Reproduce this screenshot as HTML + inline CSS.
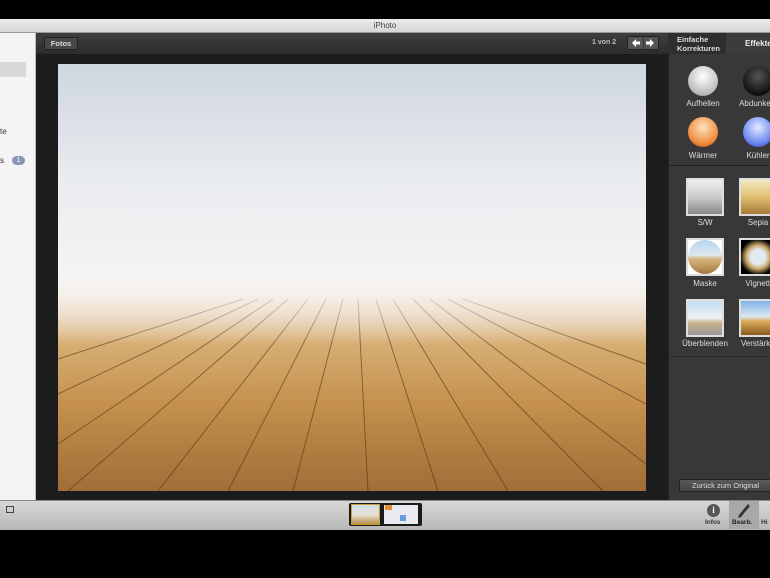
<!DOCTYPE html>
<html><head><meta charset="utf-8"><style>
*{margin:0;padding:0;box-sizing:border-box}
body{width:770px;height:578px;background:#000;position:relative;overflow:hidden;font-family:"Liberation Sans",sans-serif}
.a{position:absolute}
.lbl{position:absolute;color:#ddd;font-size:8px;text-align:center;width:60px}
.orb{position:absolute;width:30px;height:30px;border-radius:50%}
.th{position:absolute;width:38px;height:38px;border:2px solid #ddd}
</style></head><body>
<div class="a" style="left:0;top:19px;width:770px;height:14px;background:linear-gradient(#ececec,#d6d6d6);border-bottom:1px solid #999"></div>
<div class="a" style="left:0;top:19px;width:770px;height:14px;text-align:center;font-size:8px;line-height:14px;color:#444">iPhoto</div>
<div class="a" style="left:0;top:33px;width:36px;height:467px;background:#f4f4f5;border-right:1px solid #bbb"></div>
<div class="a" style="left:0;top:62px;width:26px;height:15px;background:#d8d8da"></div>
<div class="a" style="left:0;top:127px;font-size:8px;color:#333">te</div>
<div class="a" style="left:0;top:156px;font-size:8px;color:#333">s</div>
<div class="a" style="left:12px;top:156px;width:13px;height:9px;border-radius:5px;background:#8a98b5;color:#fff;font-size:7px;text-align:center;line-height:9px">1</div>
<div class="a" style="left:36px;top:33px;width:632px;height:467px;background:#1c1c1c"></div>
<div class="a" style="left:36px;top:33px;width:632px;height:21px;background:linear-gradient(#3e3e3e,#2c2c2c)"></div>
<div class="a" style="left:44px;top:37px;width:34px;height:13px;background:#474747;border:1px solid #222;border-radius:2px;color:#ddd;font-size:7.5px;line-height:11px;text-align:center;font-weight:bold">Fotos</div>
<div class="a" style="left:592px;top:39px;font-size:7px;color:#bbb;font-weight:bold">1 von 2</div>
<div class="a" style="left:627px;top:36px;width:32px;height:14px;background:#555;border:1px solid #222;border-radius:2px"></div>
<div class="a" style="left:643px;top:37px;width:1px;height:12px;background:#333"></div>
<svg class="a" style="left:630px;top:38px" width="28" height="10"><path d="M2 5 L6 1 L6 3.5 L10 3.5 L10 6.5 L6 6.5 L6 9 Z" fill="#fff"/><path d="M24 5 L20 1 L20 3.5 L16 3.5 L16 6.5 L20 6.5 L20 9 Z" fill="#fff"/></svg>
<svg class="a" style="left:58px;top:64px" width="588" height="427" viewBox="0 0 588 427">
<defs><linearGradient id="g" x1="0" y1="0" x2="0" y2="1">
<stop offset="0" stop-color="#cfd6de"/><stop offset="0.3" stop-color="#eceef2"/><stop offset="0.5" stop-color="#f4f1ef"/><stop offset="0.56" stop-color="#ecdcc4"/><stop offset="0.66" stop-color="#d6ad72"/><stop offset="0.8" stop-color="#c4904c"/><stop offset="1" stop-color="#a06e38"/></linearGradient>
<linearGradient id="f" x1="0" y1="0" x2="0" y2="1"><stop offset="0" stop-color="#f6f4f2" stop-opacity="0"/><stop offset="0.45" stop-color="#f6f4f2" stop-opacity="0.95"/><stop offset="1" stop-color="#f6f4f2" stop-opacity="0"/></linearGradient></defs>
<rect width="588" height="427" fill="url(#g)"/>
<g stroke="#4a2e12" stroke-width="1" opacity="0.55">
<line x1="200" y1="235" x2="0" y2="330"/><line x1="215" y1="235" x2="0" y2="380"/><line x1="230" y1="235" x2="10" y2="427"/><line x1="250" y1="235" x2="100" y2="427"/><line x1="268" y1="235" x2="170" y2="427"/><line x1="285" y1="235" x2="235" y2="427"/><line x1="300" y1="235" x2="310" y2="427"/><line x1="318" y1="235" x2="380" y2="427"/><line x1="335" y1="235" x2="450" y2="427"/><line x1="355" y1="235" x2="545" y2="427"/><line x1="372" y1="235" x2="588" y2="400"/><line x1="390" y1="235" x2="588" y2="340"/><line x1="405" y1="235" x2="588" y2="300"/><line x1="185" y1="235" x2="0" y2="295"/>
</g>
<rect y="160" width="588" height="120" fill="url(#f)"/>
</svg>
<div class="a" style="left:668px;top:33px;width:102px;height:467px;background:#383838;border-left:1px solid #222"></div>
<div class="a" style="left:668px;top:33px;width:58px;height:21px;background:#2e2e2e;color:#ddd;font-size:7.5px;font-weight:bold;padding:2px 0 0 9px;line-height:9px">Einfache<br>Korrekturen</div>
<div class="a" style="left:726px;top:33px;width:44px;height:21px;background:#3c3c3c;color:#eee;font-size:8px;font-weight:bold;padding:6px 0 0 19px">Effekte</div>
<div class="a" style="left:668px;top:165px;width:102px;height:1px;background:#222"></div>
<div class="a" style="left:668px;top:356px;width:102px;height:1px;background:#2a2a2a"></div>
<div class="orb" style="left:688px;top:66px;background:radial-gradient(circle at 50% 35%,#fff,#bbb 70%,#888)"></div>
<div class="orb" style="left:743px;top:66px;background:radial-gradient(circle at 50% 35%,#555,#111 70%)"></div>
<div class="orb" style="left:688px;top:117px;background:radial-gradient(circle at 50% 35%,#fde3c0,#f08b3c 65%,#b5351b)"></div>
<div class="orb" style="left:743px;top:117px;background:radial-gradient(circle at 50% 35%,#e5ecff,#6a86f2 65%,#2331a0)"></div>
<div class="lbl" style="left:673px;top:99px">Aufhellen</div><div class="lbl" style="left:728px;top:99px">Abdunkeln</div>
<div class="lbl" style="left:673px;top:151px">Wärmer</div><div class="lbl" style="left:728px;top:151px">Kühler</div>
<div class="th" style="left:686px;top:178px;background:linear-gradient(#eee,#ccc 50%,#888)"></div>
<div class="th" style="left:739px;top:178px;background:linear-gradient(#f3e8c0,#e0c070 50%,#a77a38)"></div>
<div class="th" style="left:686px;top:238px;background:#fff"><div style="width:34px;height:34px;border-radius:50%;background:linear-gradient(#b8d4ee,#dde8ef 45%,#d8b880 55%,#a07840)"></div></div>
<div class="th" style="left:739px;top:238px;background:radial-gradient(circle,#e0ecf2 30%,#c8a868 50%,#000 75%)"></div>
<div class="th" style="left:686px;top:299px;background:linear-gradient(#c4ddf0,#eef2f4 50%,#c9b18a 65%,#999)"></div>
<div class="th" style="left:739px;top:299px;background:linear-gradient(#7fb3e6,#dde9f1 45%,#d9a955 60%,#8c5a20)"></div>
<div class="lbl" style="left:675px;top:218px">S/W</div><div class="lbl" style="left:728px;top:218px">Sepia</div>
<div class="lbl" style="left:675px;top:279px">Maske</div><div class="lbl" style="left:730px;top:279px">Vignette</div>
<div class="lbl" style="left:675px;top:339px">Überblenden</div><div class="lbl" style="left:730px;top:339px">Verstärken</div>
<div class="a" style="left:679px;top:479px;width:95px;height:13px;background:linear-gradient(#5a5a5a,#444);border:1px solid #222;border-radius:2px;color:#ddd;font-size:7.5px;line-height:11px;padding-left:12px">Zurück zum Original</div>
<div class="a" style="left:0;top:500px;width:770px;height:30px;background:linear-gradient(#d8d8d8,#b8b8b8);border-top:1px solid #888"></div>
<div class="a" style="left:6px;top:506px;width:8px;height:7px;border:1px solid #444"></div>
<div class="a" style="left:349px;top:503px;width:73px;height:23px;background:#1a1a1a;border-radius:2px"></div>
<div class="a" style="left:351px;top:504px;width:29px;height:21px;border:1px solid #c8a030;background:linear-gradient(#cfdbe6,#e7e2d8 50%,#b8914f)"></div>
<div class="a" style="left:384px;top:505px;width:34px;height:19px;background:#e8eaf0"></div>
<div class="a" style="left:385px;top:505px;width:7px;height:5px;background:#e89030"></div>
<div class="a" style="left:400px;top:515px;width:6px;height:6px;background:#6a9ad8"></div>
<div class="a" style="left:707px;top:504px;width:13px;height:13px;border-radius:50%;background:#555;color:#fff;font-size:9px;font-weight:bold;text-align:center;line-height:13px;font-family:'Liberation Serif',serif">i</div>
<div class="a" style="left:705px;top:519px;font-size:6.5px;color:#333;font-weight:bold">Infos</div>
<div class="a" style="left:729px;top:501px;width:30px;height:28px;background:#a8a8a8"></div>
<svg class="a" style="left:737px;top:503px" width="14" height="16"><path d="M11 1 L13 3 L4 14 L1 15 L2 12 Z" fill="#333"/></svg>
<div class="a" style="left:732px;top:519px;font-size:6.5px;color:#222;font-weight:bold">Bearb.</div>
<div class="a" style="left:761px;top:519px;font-size:6.5px;color:#333;font-weight:bold">Hi</div>
</body></html>
